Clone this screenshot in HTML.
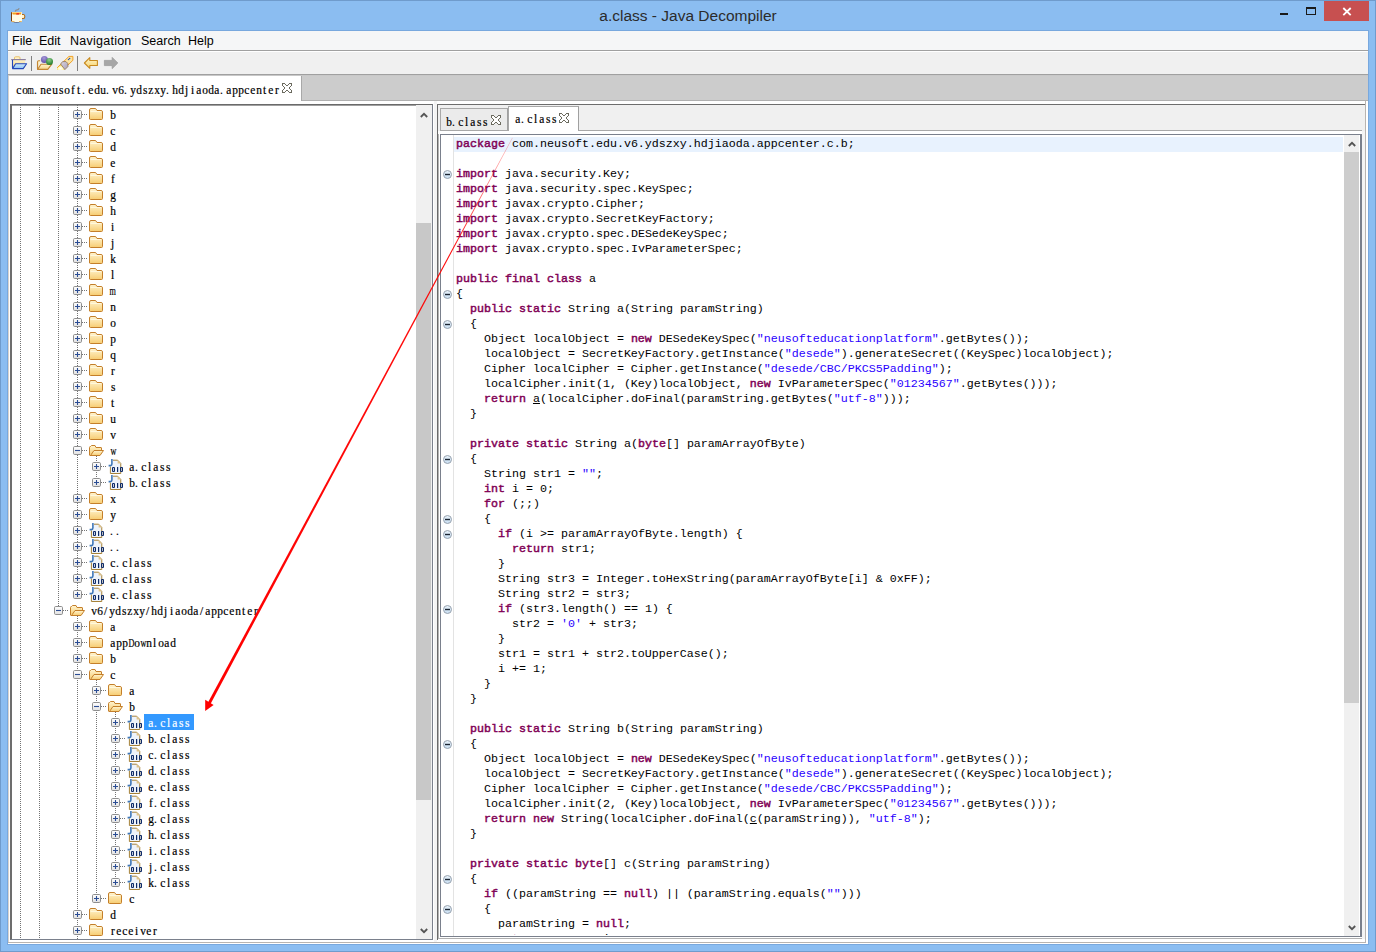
<!DOCTYPE html><html><head><meta charset="utf-8"><style>
*{margin:0;padding:0}
html,body{width:1376px;height:952px;overflow:hidden}
body{position:relative;background:#8bbdf1;font-family:"Liberation Sans",sans-serif}
body div,body svg{position:absolute}
body div div,body div svg{position:absolute}
.tt{font-size:15.5px;color:#2b2b2b;line-height:20px}
.mn{font-size:12.5px;color:#000;line-height:16px}
.tr{font-family:"Liberation Serif",serif;font-size:12px;line-height:15px;color:#000;white-space:pre;-webkit-text-stroke:0.2px currentColor}
.tr i{font-style:normal;display:inline-flex;justify-content:center;width:6px}
.tr em{font-style:normal;display:inline-block;transform:scaleX(0.95)}
.tr em.w{transform:scaleX(0.68)}
.tr{margin-left:0}
.cd{font-family:"Liberation Mono",monospace;font-size:11.6667px;line-height:15px;white-space:pre;color:#000}
.cd b{color:#7f0055;font-weight:normal;-webkit-text-stroke:0.45px #7f0055}
.cd .s{color:#2a00ff}
.cd u{text-decoration:underline}
.dv{width:1px;background:repeating-linear-gradient(to bottom,#747474 0 1px,transparent 1px 2px)}
.dh{height:1px;background:repeating-linear-gradient(to right,#747474 0 1px,transparent 1px 2px)}
</style></head><body>
<svg width="0" height="0" style="position:absolute">
<defs>
<linearGradient id="gF" x1="0" y1="0" x2="0" y2="1"><stop offset="0" stop-color="#fff5d2"/><stop offset="1" stop-color="#f7cd72"/></linearGradient>
<linearGradient id="gB" x1="0" y1="0" x2="0" y2="1"><stop offset="0" stop-color="#ffffff"/><stop offset="1" stop-color="#e2e2e2"/></linearGradient>
<linearGradient id="gC" x1="0" y1="0" x2="0" y2="1"><stop offset="0" stop-color="#eaf3fb"/><stop offset="1" stop-color="#c8def2"/></linearGradient>
<symbol id="plus" viewBox="0 0 9 9"><rect x="0.5" y="0.5" width="8" height="8" rx="1.2" fill="url(#gB)" stroke="#8e8e8e"/><path d="M2 4.5h5M4.5 2v5" stroke="#2b4d94" stroke-width="1.1"/></symbol>
<symbol id="minus" viewBox="0 0 9 9"><rect x="0.5" y="0.5" width="8" height="8" rx="1.2" fill="url(#gB)" stroke="#8e8e8e"/><path d="M2 4.5h5" stroke="#2b4d94" stroke-width="1.1"/></symbol>
<symbol id="fc" viewBox="0 0 16 14"><path d="M0.5 11V2q0-1.5 1.5-1.5h4.6L8 2.5h4q1.5 0 1.5 1.5v6.5q0 1-1 1H1.5q-1 0-1-1z" fill="url(#gF)" stroke="#c47f2a"/><path d="M1.5 3.5h11" stroke="#fff8dc" stroke-width="1"/></symbol>
<symbol id="fo" viewBox="0 0 16 13"><path d="M0.5 10V2.5q0-1 1-1L2.5 0.5h3.5l1 2h5q0.5 0 0.5 0.5v3" fill="url(#gF)" stroke="#c47f2a"/><path d="M1.5 10.5L5 5.5h9.5L11 10.5z" fill="url(#gF)" stroke="#c47f2a" stroke-linejoin="round"/><path d="M0.5 10.5h10.5" stroke="#c47f2a"/></symbol>
<symbol id="cls" viewBox="0 0 16 16"><path d="M2.4 8.5v7h10.35V5.4l-3.1-3.2H5" fill="#eef3fa" stroke="#a6823a"/><path d="M9.6 2.2v3.2h3.2z" fill="#e2c488"/><path d="M3.9 1v5q0 1.6-1.6 1.6H0.6" fill="none" stroke="#3f77b8" stroke-width="1.6"/><path fill-rule="evenodd" fill="#0f2b68" d="M5 9h1q1 0 1 1v3q0 1-1 1h-1q-1 0-1-1v-3q0-1 1-1zM5.1 10v3h0.8v-3zM9 9h1.2v5h-1.2zM13 9h1q1 0 1 1v3q0 1-1 1h-1q-1 0-1-1v-3q0-1 1-1zM13.1 10v3h0.8v-3z"/></symbol>
<symbol id="fold" viewBox="0 0 9 9"><circle cx="4.5" cy="4.5" r="4" fill="url(#gC)" stroke="#98a3af"/><path d="M2 4.5h5" stroke="#1b2532" stroke-width="1.4"/></symbol>
<symbol id="tx" viewBox="0 0 10 10"><path d="M1 1h2l3 3l3-3h... " fill="none"/><path d="M1 1H3L5 3L7 1H9V3L7 5L9 7V9H7L5 7L3 9H1V7L3 5L1 3Z" fill="#fff"/><path d="M0 0h3v1h-3zM7 0h3v1h-3zM0 1h1v1h-1zM3 1h1v1h-1zM6 1h1v1h-1zM9 1h1v1h-1zM0 2h1v1h-1zM4 2h2v1h-2zM9 2h1v1h-1zM1 3h1v1h-1zM8 3h1v1h-1zM2 4h1v1h-1zM7 4h1v1h-1zM2 5h1v1h-1zM7 5h1v1h-1zM1 6h1v1h-1zM8 6h1v1h-1zM0 7h1v1h-1zM4 7h2v1h-2zM9 7h1v1h-1zM0 8h1v1h-1zM3 8h1v1h-1zM6 8h1v1h-1zM9 8h1v1h-1zM0 9h3v1h-3zM7 9h3v1h-3z" fill="#6b6a5e" shape-rendering="crispEdges"/></symbol>
<symbol id="up" viewBox="0 0 8 6"><path d="M0.8 5L4 1.8L7.2 5" fill="none" stroke="#555" stroke-width="1.8"/></symbol>
<symbol id="dn" viewBox="0 0 8 6"><path d="M0.8 1L4 4.2L7.2 1" fill="none" stroke="#555" stroke-width="1.8"/></symbol>
</defs></svg>
<div style="left:0px;top:0px;width:1376px;height:1px;background:#6f9bcc;"></div>
<div style="left:0px;top:0px;width:1px;height:952px;background:#6f9bcc;"></div>
<div style="left:1375px;top:0px;width:1px;height:952px;background:#6f9bcc;"></div>
<div style="left:0px;top:951px;width:1376px;height:1px;background:#6f9bcc;"></div>
<div class="tt" style="left:0;top:6px;width:1376px;text-align:center">a.class - Java Decompiler</div>
<div style="left:1324px;top:1px;width:45px;height:20px;background:#c75050;"></div>
<svg style="left:1342px;top:7px" width="10" height="9"><path d="M1.3 1L8.7 8.2M8.7 1L1.3 8.2" stroke="#fff" stroke-width="1.8"/></svg>
<div style="left:1306px;top:7px;width:8px;height:5px;border:1px solid #1a1a1a;border-top-width:2px"></div>
<div style="left:1280px;top:13px;width:8px;height:2px;background:#1a1a1a;"></div>
<svg style="left:0px;top:0px" width="30" height="30" viewBox="0 0 30 30">
<path d="M15.2 11.5q0.5-1.5 2-1.6q1.2 0 2-1.6" fill="none" stroke="#8c8c8c" stroke-width="1.2"/>
<ellipse cx="16.5" cy="22.3" rx="3" ry="0.8" fill="#5a5060" opacity="0.6"/>
<path d="M22 14.5h1.5q1.3 0 1.3 2t-1.3 2H22" fill="#fff4d0" stroke="#b06a18" stroke-width="1.1"/>
<rect x="11" y="12" width="11" height="10" fill="#fffbe6"/>
<path d="M11.5 12.2v9.3" stroke="#7a3e10" stroke-width="1"/>
<path d="M12 12.4h9.6l-0.8 2.2h-8z" fill="#f2a020"/>
<path d="M16.5 13.2h2.8l-0.5 1.4h-2.6z" fill="#e8181a"/>
<path d="M12 21.6h2.5M19 21.6h2.8" stroke="#e0a040" stroke-width="0.9"/>
</svg>
<div style="left:7px;top:30px;width:1362px;height:915px;background:#78a8de;"></div>
<div style="left:8px;top:31px;width:1360px;height:913px;background:#ffffff;"></div>
<div style="left:8px;top:31px;width:1360px;height:19px;background:#f5f6f7;"></div>
<div style="left:8px;top:50px;width:1360px;height:1px;background:#a0a0a0;"></div>
<div style="left:8px;top:51px;width:1360px;height:1px;background:#ffffff;"></div>
<div class="mn" style="left:12px;top:33px;letter-spacing:0px">File</div>
<div class="mn" style="left:39px;top:33px;letter-spacing:0px">Edit</div>
<div class="mn" style="left:70px;top:33px;letter-spacing:0.25px">Navigation</div>
<div class="mn" style="left:141px;top:33px;letter-spacing:0px">Search</div>
<div class="mn" style="left:188px;top:33px;letter-spacing:0px">Help</div>
<div style="left:8px;top:52px;width:1360px;height:22px;background:#f0f0f0;"></div>
<div style="left:8px;top:74px;width:1360px;height:1px;background:#a0a0a0;"></div>
<div style="left:8px;top:75px;width:1360px;height:1px;background:#c8c8c8;"></div>
<div style="left:31px;top:56px;width:1px;height:15px;background:#808080;"></div>
<div style="left:77px;top:56px;width:1px;height:15px;background:#808080;"></div>
<svg style="left:8px;top:52px" width="115" height="22" viewBox="8 52 115 22">
<defs>
<linearGradient id="tbY" x1="0" y1="0" x2="0" y2="1"><stop offset="0" stop-color="#fff4cc"/><stop offset="1" stop-color="#f6d589"/></linearGradient>
<linearGradient id="tbB" x1="0" y1="0" x2="0" y2="1"><stop offset="0" stop-color="#d2ecff"/><stop offset="1" stop-color="#8cc0f0"/></linearGradient>
<radialGradient id="tbP" cx="0.45" cy="0.3" r="0.7"><stop offset="0" stop-color="#a89ad8"/><stop offset="1" stop-color="#5e4ea8"/></radialGradient>
<radialGradient id="tbG" cx="0.45" cy="0.3" r="0.7"><stop offset="0" stop-color="#8fd08a"/><stop offset="1" stop-color="#1f7a2c"/></radialGradient>
<linearGradient id="tbT" x1="0" y1="1" x2="1" y2="0"><stop offset="0" stop-color="#fffbe6"/><stop offset="1" stop-color="#f2c640"/></linearGradient>
</defs>
<path d="M14.5 59.5V57.8q0-1 1-1h3.5q1 0 1 1v1.7" fill="#fff3c8" stroke="#e8bf6a"/>
<rect x="13" y="59.5" width="12" height="8" fill="url(#tbY)"/>
<path d="M11.2 59.6h14.6" stroke="#8d7f9c" stroke-width="1.2"/>
<path d="M12.5 60v8.5" stroke="#2448b8" stroke-width="1.1"/>
<path d="M12.6 68.6L15.6 63.8H26.6L23.2 68.6Z" fill="url(#tbB)" stroke="#2448b8" stroke-width="1.1" stroke-linejoin="round"/>
<path d="M37.5 69.3V62q0-1.3 1.2-1.3h1.5" fill="url(#tbY)" stroke="#c48635" stroke-width="1.1"/>
<path d="M37.6 69.4L41 64.2H51.8L47.8 69.4Z" fill="url(#tbY)" stroke="#c48635" stroke-width="1.1" stroke-linejoin="round"/>
<circle cx="44.4" cy="59.5" r="3.5" fill="url(#tbP)"/>
<circle cx="49.5" cy="61.4" r="3.5" fill="url(#tbG)"/>
<radialGradient id="tbW" cx="0.45" cy="0.75" r="0.6"><stop offset="0" stop-color="#ffffff"/><stop offset="0.5" stop-color="#fff8c0"/><stop offset="1" stop-color="#f2d040"/></radialGradient>
<linearGradient id="tbS" x1="0" y1="0" x2="1" y2="1"><stop offset="0" stop-color="#dcd8e4"/><stop offset="1" stop-color="#a69cb4"/></linearGradient>
<path d="M63.8 61.4L68.9 56.4H72.9V60.3L67.8 65.2Z" fill="#fbe4a2" stroke="#f2a126" stroke-width="1"/>
<path d="M57 70V67.6L60.6 64L64.8 69.8Z" fill="url(#tbW)"/>
<path d="M57.2 67.8L63.8 61.4" stroke="#f2a126" stroke-width="1"/>
<path d="M60.6 64L62.6 61.6H66L67.9 63.6V66.6L64.9 69.6Z" fill="url(#tbS)" stroke="#8e7250" stroke-width="0.8" stroke-linejoin="round"/>
<circle cx="68.5" cy="59.5" r="0.75" fill="#2f57b0"/><circle cx="69.6" cy="58.4" r="0.75" fill="#2f57b0"/>
<linearGradient id="tbA" x1="0" y1="0" x2="0" y2="1"><stop offset="0" stop-color="#fff6d0"/><stop offset="1" stop-color="#f7d266"/></linearGradient><path d="M84.4 63L89.8 57.7V60.5H97.4V65.5H89.8V68.3Z" fill="url(#tbA)" stroke="#c88a1f" stroke-width="1.1" stroke-linejoin="round"/>
<path d="M117.8 63L112.2 57.4V60.4H104.4V65.6H112.2V68.6Z" fill="#a6a6a6" stroke="#9a9a9a" stroke-width="0.8" stroke-linejoin="round"/>
</svg>
<div style="left:8px;top:76px;width:1360px;height:25px;background:#cccccc;"></div>
<div style="left:301px;top:100px;width:1067px;height:1px;background:#b0b0b0;"></div>
<div style="left:8px;top:76px;width:294px;height:25px;background:#ffffff;border-left:1px solid #b5b5b5;border-right:1px solid #a8a8a8;box-sizing:border-box"></div>
<div style="left:8px;top:101px;width:294px;height:3px;background:#ffffff;"></div>
<div class="tr" style="left:16px;top:83px"><i><em>c</em></i><i><em>o</em></i><i><em class="w">m</em></i><i style="justify-content:flex-start"><em>.</em></i><i><em>n</em></i><i><em>e</em></i><i><em>u</em></i><i><em>s</em></i><i><em>o</em></i><i><em>f</em></i><i><em>t</em></i><i style="justify-content:flex-start"><em>.</em></i><i><em>e</em></i><i><em>d</em></i><i><em>u</em></i><i style="justify-content:flex-start"><em>.</em></i><i><em>v</em></i><i><em>6</em></i><i style="justify-content:flex-start"><em>.</em></i><i><em>y</em></i><i><em>d</em></i><i><em>s</em></i><i><em>z</em></i><i><em>x</em></i><i><em>y</em></i><i style="justify-content:flex-start"><em>.</em></i><i><em>h</em></i><i><em>d</em></i><i><em>j</em></i><i><em>i</em></i><i><em>a</em></i><i><em>o</em></i><i><em>d</em></i><i><em>a</em></i><i style="justify-content:flex-start"><em>.</em></i><i><em>a</em></i><i><em>p</em></i><i><em>p</em></i><i><em>c</em></i><i><em>e</em></i><i><em>n</em></i><i><em>t</em></i><i><em>e</em></i><i><em>r</em></i></div>
<svg style="left:282px;top:83px" width="10" height="10"><use href="#tx"/></svg>
<div style="left:10px;top:104px;width:423px;height:836px;background:#ffffff;box-sizing:border-box;border-top:1px solid #6a6a6a;border-left:2px solid #6d6d6d;border-bottom:1px solid #7a808c;border-right:1px solid #7a808c"></div>
<div style="left:12px;top:105px;width:420px;height:1px;background:#a0a0a0;"></div>
<div style="left:12px;top:105px;width:404px;height:834px;overflow:hidden" id="tree">
<div class="dv" style="left:8px;top:0px;height:834px"></div>
<div class="dv" style="left:27px;top:0px;height:834px"></div>
<div class="dv" style="left:46px;top:0px;height:501px"></div>
<div class="dv" style="left:65px;top:0px;height:489px"></div>
<div class="dv" style="left:65px;top:511px;height:323px"></div>
<div class="dv" style="left:84px;top:351px;height:26px"></div>
<div class="dv" style="left:84px;top:575px;height:218px"></div>
<div class="dv" style="left:103px;top:607px;height:170px"></div>
<div class="dh" style="left:70px;top:9px;width:6px"></div>
<svg style="left:61px;top:5px" width="9" height="9"><use href="#plus"/></svg>
<svg style="left:77px;top:3px" width="16" height="14"><use href="#fc"/></svg>
<div class="tr" style="left:98px;top:3px"><i><em>b</em></i></div>
<div class="dh" style="left:70px;top:25px;width:6px"></div>
<svg style="left:61px;top:21px" width="9" height="9"><use href="#plus"/></svg>
<svg style="left:77px;top:19px" width="16" height="14"><use href="#fc"/></svg>
<div class="tr" style="left:98px;top:19px"><i><em>c</em></i></div>
<div class="dh" style="left:70px;top:41px;width:6px"></div>
<svg style="left:61px;top:37px" width="9" height="9"><use href="#plus"/></svg>
<svg style="left:77px;top:35px" width="16" height="14"><use href="#fc"/></svg>
<div class="tr" style="left:98px;top:35px"><i><em>d</em></i></div>
<div class="dh" style="left:70px;top:57px;width:6px"></div>
<svg style="left:61px;top:53px" width="9" height="9"><use href="#plus"/></svg>
<svg style="left:77px;top:51px" width="16" height="14"><use href="#fc"/></svg>
<div class="tr" style="left:98px;top:51px"><i><em>e</em></i></div>
<div class="dh" style="left:70px;top:73px;width:6px"></div>
<svg style="left:61px;top:69px" width="9" height="9"><use href="#plus"/></svg>
<svg style="left:77px;top:67px" width="16" height="14"><use href="#fc"/></svg>
<div class="tr" style="left:98px;top:67px"><i><em>f</em></i></div>
<div class="dh" style="left:70px;top:89px;width:6px"></div>
<svg style="left:61px;top:85px" width="9" height="9"><use href="#plus"/></svg>
<svg style="left:77px;top:83px" width="16" height="14"><use href="#fc"/></svg>
<div class="tr" style="left:98px;top:83px"><i><em>g</em></i></div>
<div class="dh" style="left:70px;top:105px;width:6px"></div>
<svg style="left:61px;top:101px" width="9" height="9"><use href="#plus"/></svg>
<svg style="left:77px;top:99px" width="16" height="14"><use href="#fc"/></svg>
<div class="tr" style="left:98px;top:99px"><i><em>h</em></i></div>
<div class="dh" style="left:70px;top:121px;width:6px"></div>
<svg style="left:61px;top:117px" width="9" height="9"><use href="#plus"/></svg>
<svg style="left:77px;top:115px" width="16" height="14"><use href="#fc"/></svg>
<div class="tr" style="left:98px;top:115px"><i><em>i</em></i></div>
<div class="dh" style="left:70px;top:137px;width:6px"></div>
<svg style="left:61px;top:133px" width="9" height="9"><use href="#plus"/></svg>
<svg style="left:77px;top:131px" width="16" height="14"><use href="#fc"/></svg>
<div class="tr" style="left:98px;top:131px"><i><em>j</em></i></div>
<div class="dh" style="left:70px;top:153px;width:6px"></div>
<svg style="left:61px;top:149px" width="9" height="9"><use href="#plus"/></svg>
<svg style="left:77px;top:147px" width="16" height="14"><use href="#fc"/></svg>
<div class="tr" style="left:98px;top:147px"><i><em>k</em></i></div>
<div class="dh" style="left:70px;top:169px;width:6px"></div>
<svg style="left:61px;top:165px" width="9" height="9"><use href="#plus"/></svg>
<svg style="left:77px;top:163px" width="16" height="14"><use href="#fc"/></svg>
<div class="tr" style="left:98px;top:163px"><i><em>l</em></i></div>
<div class="dh" style="left:70px;top:185px;width:6px"></div>
<svg style="left:61px;top:181px" width="9" height="9"><use href="#plus"/></svg>
<svg style="left:77px;top:179px" width="16" height="14"><use href="#fc"/></svg>
<div class="tr" style="left:98px;top:179px"><i><em class="w">m</em></i></div>
<div class="dh" style="left:70px;top:201px;width:6px"></div>
<svg style="left:61px;top:197px" width="9" height="9"><use href="#plus"/></svg>
<svg style="left:77px;top:195px" width="16" height="14"><use href="#fc"/></svg>
<div class="tr" style="left:98px;top:195px"><i><em>n</em></i></div>
<div class="dh" style="left:70px;top:217px;width:6px"></div>
<svg style="left:61px;top:213px" width="9" height="9"><use href="#plus"/></svg>
<svg style="left:77px;top:211px" width="16" height="14"><use href="#fc"/></svg>
<div class="tr" style="left:98px;top:211px"><i><em>o</em></i></div>
<div class="dh" style="left:70px;top:233px;width:6px"></div>
<svg style="left:61px;top:229px" width="9" height="9"><use href="#plus"/></svg>
<svg style="left:77px;top:227px" width="16" height="14"><use href="#fc"/></svg>
<div class="tr" style="left:98px;top:227px"><i><em>p</em></i></div>
<div class="dh" style="left:70px;top:249px;width:6px"></div>
<svg style="left:61px;top:245px" width="9" height="9"><use href="#plus"/></svg>
<svg style="left:77px;top:243px" width="16" height="14"><use href="#fc"/></svg>
<div class="tr" style="left:98px;top:243px"><i><em>q</em></i></div>
<div class="dh" style="left:70px;top:265px;width:6px"></div>
<svg style="left:61px;top:261px" width="9" height="9"><use href="#plus"/></svg>
<svg style="left:77px;top:259px" width="16" height="14"><use href="#fc"/></svg>
<div class="tr" style="left:98px;top:259px"><i><em>r</em></i></div>
<div class="dh" style="left:70px;top:281px;width:6px"></div>
<svg style="left:61px;top:277px" width="9" height="9"><use href="#plus"/></svg>
<svg style="left:77px;top:275px" width="16" height="14"><use href="#fc"/></svg>
<div class="tr" style="left:98px;top:275px"><i><em>s</em></i></div>
<div class="dh" style="left:70px;top:297px;width:6px"></div>
<svg style="left:61px;top:293px" width="9" height="9"><use href="#plus"/></svg>
<svg style="left:77px;top:291px" width="16" height="14"><use href="#fc"/></svg>
<div class="tr" style="left:98px;top:291px"><i><em>t</em></i></div>
<div class="dh" style="left:70px;top:313px;width:6px"></div>
<svg style="left:61px;top:309px" width="9" height="9"><use href="#plus"/></svg>
<svg style="left:77px;top:307px" width="16" height="14"><use href="#fc"/></svg>
<div class="tr" style="left:98px;top:307px"><i><em>u</em></i></div>
<div class="dh" style="left:70px;top:329px;width:6px"></div>
<svg style="left:61px;top:325px" width="9" height="9"><use href="#plus"/></svg>
<svg style="left:77px;top:323px" width="16" height="14"><use href="#fc"/></svg>
<div class="tr" style="left:98px;top:323px"><i><em>v</em></i></div>
<div class="dh" style="left:70px;top:345px;width:6px"></div>
<svg style="left:61px;top:341px" width="9" height="9"><use href="#minus"/></svg>
<svg style="left:77px;top:340px" width="16" height="13"><use href="#fo"/></svg>
<div class="tr" style="left:98px;top:339px"><i><em class="w">w</em></i></div>
<div class="dh" style="left:89px;top:361px;width:6px"></div>
<svg style="left:80px;top:357px" width="9" height="9"><use href="#plus"/></svg>
<svg style="left:96px;top:353px" width="16" height="16"><use href="#cls"/></svg>
<div class="tr" style="left:117px;top:355px"><i><em>a</em></i><i style="justify-content:flex-start"><em>.</em></i><i><em>c</em></i><i><em>l</em></i><i><em>a</em></i><i><em>s</em></i><i><em>s</em></i></div>
<div class="dh" style="left:89px;top:377px;width:6px"></div>
<svg style="left:80px;top:373px" width="9" height="9"><use href="#plus"/></svg>
<svg style="left:96px;top:369px" width="16" height="16"><use href="#cls"/></svg>
<div class="tr" style="left:117px;top:371px"><i><em>b</em></i><i style="justify-content:flex-start"><em>.</em></i><i><em>c</em></i><i><em>l</em></i><i><em>a</em></i><i><em>s</em></i><i><em>s</em></i></div>
<div class="dh" style="left:70px;top:393px;width:6px"></div>
<svg style="left:61px;top:389px" width="9" height="9"><use href="#plus"/></svg>
<svg style="left:77px;top:387px" width="16" height="14"><use href="#fc"/></svg>
<div class="tr" style="left:98px;top:387px"><i><em>x</em></i></div>
<div class="dh" style="left:70px;top:409px;width:6px"></div>
<svg style="left:61px;top:405px" width="9" height="9"><use href="#plus"/></svg>
<svg style="left:77px;top:403px" width="16" height="14"><use href="#fc"/></svg>
<div class="tr" style="left:98px;top:403px"><i><em>y</em></i></div>
<div class="dh" style="left:70px;top:425px;width:6px"></div>
<svg style="left:61px;top:421px" width="9" height="9"><use href="#plus"/></svg>
<svg style="left:77px;top:417px" width="16" height="16"><use href="#cls"/></svg>
<div class="tr" style="left:98px;top:419px"><i style="justify-content:flex-start"><em>.</em></i><i style="justify-content:flex-start"><em>.</em></i></div>
<div class="dh" style="left:70px;top:441px;width:6px"></div>
<svg style="left:61px;top:437px" width="9" height="9"><use href="#plus"/></svg>
<svg style="left:77px;top:433px" width="16" height="16"><use href="#cls"/></svg>
<div class="tr" style="left:98px;top:435px"><i style="justify-content:flex-start"><em>.</em></i><i style="justify-content:flex-start"><em>.</em></i></div>
<div class="dh" style="left:70px;top:457px;width:6px"></div>
<svg style="left:61px;top:453px" width="9" height="9"><use href="#plus"/></svg>
<svg style="left:77px;top:449px" width="16" height="16"><use href="#cls"/></svg>
<div class="tr" style="left:98px;top:451px"><i><em>c</em></i><i style="justify-content:flex-start"><em>.</em></i><i><em>c</em></i><i><em>l</em></i><i><em>a</em></i><i><em>s</em></i><i><em>s</em></i></div>
<div class="dh" style="left:70px;top:473px;width:6px"></div>
<svg style="left:61px;top:469px" width="9" height="9"><use href="#plus"/></svg>
<svg style="left:77px;top:465px" width="16" height="16"><use href="#cls"/></svg>
<div class="tr" style="left:98px;top:467px"><i><em>d</em></i><i style="justify-content:flex-start"><em>.</em></i><i><em>c</em></i><i><em>l</em></i><i><em>a</em></i><i><em>s</em></i><i><em>s</em></i></div>
<div class="dh" style="left:70px;top:489px;width:6px"></div>
<svg style="left:61px;top:485px" width="9" height="9"><use href="#plus"/></svg>
<svg style="left:77px;top:481px" width="16" height="16"><use href="#cls"/></svg>
<div class="tr" style="left:98px;top:483px"><i><em>e</em></i><i style="justify-content:flex-start"><em>.</em></i><i><em>c</em></i><i><em>l</em></i><i><em>a</em></i><i><em>s</em></i><i><em>s</em></i></div>
<div class="dh" style="left:51px;top:505px;width:6px"></div>
<svg style="left:42px;top:501px" width="9" height="9"><use href="#minus"/></svg>
<svg style="left:58px;top:500px" width="16" height="13"><use href="#fo"/></svg>
<div class="tr" style="left:79px;top:499px"><i><em>v</em></i><i><em>6</em></i><i><em>/</em></i><i><em>y</em></i><i><em>d</em></i><i><em>s</em></i><i><em>z</em></i><i><em>x</em></i><i><em>y</em></i><i><em>/</em></i><i><em>h</em></i><i><em>d</em></i><i><em>j</em></i><i><em>i</em></i><i><em>a</em></i><i><em>o</em></i><i><em>d</em></i><i><em>a</em></i><i><em>/</em></i><i><em>a</em></i><i><em>p</em></i><i><em>p</em></i><i><em>c</em></i><i><em>e</em></i><i><em>n</em></i><i><em>t</em></i><i><em>e</em></i><i><em>r</em></i></div>
<div class="dh" style="left:70px;top:521px;width:6px"></div>
<svg style="left:61px;top:517px" width="9" height="9"><use href="#plus"/></svg>
<svg style="left:77px;top:515px" width="16" height="14"><use href="#fc"/></svg>
<div class="tr" style="left:98px;top:515px"><i><em>a</em></i></div>
<div class="dh" style="left:70px;top:537px;width:6px"></div>
<svg style="left:61px;top:533px" width="9" height="9"><use href="#plus"/></svg>
<svg style="left:77px;top:531px" width="16" height="14"><use href="#fc"/></svg>
<div class="tr" style="left:98px;top:531px"><i><em>a</em></i><i><em>p</em></i><i><em>p</em></i><i><em class="w">D</em></i><i><em>o</em></i><i><em class="w">w</em></i><i><em>n</em></i><i><em>l</em></i><i><em>o</em></i><i><em>a</em></i><i><em>d</em></i></div>
<div class="dh" style="left:70px;top:553px;width:6px"></div>
<svg style="left:61px;top:549px" width="9" height="9"><use href="#plus"/></svg>
<svg style="left:77px;top:547px" width="16" height="14"><use href="#fc"/></svg>
<div class="tr" style="left:98px;top:547px"><i><em>b</em></i></div>
<div class="dh" style="left:70px;top:569px;width:6px"></div>
<svg style="left:61px;top:565px" width="9" height="9"><use href="#minus"/></svg>
<svg style="left:77px;top:564px" width="16" height="13"><use href="#fo"/></svg>
<div class="tr" style="left:98px;top:563px"><i><em>c</em></i></div>
<div class="dh" style="left:89px;top:585px;width:6px"></div>
<svg style="left:80px;top:581px" width="9" height="9"><use href="#plus"/></svg>
<svg style="left:96px;top:579px" width="16" height="14"><use href="#fc"/></svg>
<div class="tr" style="left:117px;top:579px"><i><em>a</em></i></div>
<div class="dh" style="left:89px;top:601px;width:6px"></div>
<svg style="left:80px;top:597px" width="9" height="9"><use href="#minus"/></svg>
<svg style="left:96px;top:596px" width="16" height="13"><use href="#fo"/></svg>
<div class="tr" style="left:117px;top:595px"><i><em>b</em></i></div>
<div class="dh" style="left:108px;top:617px;width:6px"></div>
<svg style="left:99px;top:613px" width="9" height="9"><use href="#plus"/></svg>
<svg style="left:115px;top:609px" width="16" height="16"><use href="#cls"/></svg>
<div style="left:132px;top:609px;width:50px;height:16px;background:#3399ff;"></div>
<div class="tr" style="left:136px;top:611px;color:#fff"><i><em>a</em></i><i style="justify-content:flex-start"><em>.</em></i><i><em>c</em></i><i><em>l</em></i><i><em>a</em></i><i><em>s</em></i><i><em>s</em></i></div>
<div class="dh" style="left:108px;top:633px;width:6px"></div>
<svg style="left:99px;top:629px" width="9" height="9"><use href="#plus"/></svg>
<svg style="left:115px;top:625px" width="16" height="16"><use href="#cls"/></svg>
<div class="tr" style="left:136px;top:627px"><i><em>b</em></i><i style="justify-content:flex-start"><em>.</em></i><i><em>c</em></i><i><em>l</em></i><i><em>a</em></i><i><em>s</em></i><i><em>s</em></i></div>
<div class="dh" style="left:108px;top:649px;width:6px"></div>
<svg style="left:99px;top:645px" width="9" height="9"><use href="#plus"/></svg>
<svg style="left:115px;top:641px" width="16" height="16"><use href="#cls"/></svg>
<div class="tr" style="left:136px;top:643px"><i><em>c</em></i><i style="justify-content:flex-start"><em>.</em></i><i><em>c</em></i><i><em>l</em></i><i><em>a</em></i><i><em>s</em></i><i><em>s</em></i></div>
<div class="dh" style="left:108px;top:665px;width:6px"></div>
<svg style="left:99px;top:661px" width="9" height="9"><use href="#plus"/></svg>
<svg style="left:115px;top:657px" width="16" height="16"><use href="#cls"/></svg>
<div class="tr" style="left:136px;top:659px"><i><em>d</em></i><i style="justify-content:flex-start"><em>.</em></i><i><em>c</em></i><i><em>l</em></i><i><em>a</em></i><i><em>s</em></i><i><em>s</em></i></div>
<div class="dh" style="left:108px;top:681px;width:6px"></div>
<svg style="left:99px;top:677px" width="9" height="9"><use href="#plus"/></svg>
<svg style="left:115px;top:673px" width="16" height="16"><use href="#cls"/></svg>
<div class="tr" style="left:136px;top:675px"><i><em>e</em></i><i style="justify-content:flex-start"><em>.</em></i><i><em>c</em></i><i><em>l</em></i><i><em>a</em></i><i><em>s</em></i><i><em>s</em></i></div>
<div class="dh" style="left:108px;top:697px;width:6px"></div>
<svg style="left:99px;top:693px" width="9" height="9"><use href="#plus"/></svg>
<svg style="left:115px;top:689px" width="16" height="16"><use href="#cls"/></svg>
<div class="tr" style="left:136px;top:691px"><i><em>f</em></i><i style="justify-content:flex-start"><em>.</em></i><i><em>c</em></i><i><em>l</em></i><i><em>a</em></i><i><em>s</em></i><i><em>s</em></i></div>
<div class="dh" style="left:108px;top:713px;width:6px"></div>
<svg style="left:99px;top:709px" width="9" height="9"><use href="#plus"/></svg>
<svg style="left:115px;top:705px" width="16" height="16"><use href="#cls"/></svg>
<div class="tr" style="left:136px;top:707px"><i><em>g</em></i><i style="justify-content:flex-start"><em>.</em></i><i><em>c</em></i><i><em>l</em></i><i><em>a</em></i><i><em>s</em></i><i><em>s</em></i></div>
<div class="dh" style="left:108px;top:729px;width:6px"></div>
<svg style="left:99px;top:725px" width="9" height="9"><use href="#plus"/></svg>
<svg style="left:115px;top:721px" width="16" height="16"><use href="#cls"/></svg>
<div class="tr" style="left:136px;top:723px"><i><em>h</em></i><i style="justify-content:flex-start"><em>.</em></i><i><em>c</em></i><i><em>l</em></i><i><em>a</em></i><i><em>s</em></i><i><em>s</em></i></div>
<div class="dh" style="left:108px;top:745px;width:6px"></div>
<svg style="left:99px;top:741px" width="9" height="9"><use href="#plus"/></svg>
<svg style="left:115px;top:737px" width="16" height="16"><use href="#cls"/></svg>
<div class="tr" style="left:136px;top:739px"><i><em>i</em></i><i style="justify-content:flex-start"><em>.</em></i><i><em>c</em></i><i><em>l</em></i><i><em>a</em></i><i><em>s</em></i><i><em>s</em></i></div>
<div class="dh" style="left:108px;top:761px;width:6px"></div>
<svg style="left:99px;top:757px" width="9" height="9"><use href="#plus"/></svg>
<svg style="left:115px;top:753px" width="16" height="16"><use href="#cls"/></svg>
<div class="tr" style="left:136px;top:755px"><i><em>j</em></i><i style="justify-content:flex-start"><em>.</em></i><i><em>c</em></i><i><em>l</em></i><i><em>a</em></i><i><em>s</em></i><i><em>s</em></i></div>
<div class="dh" style="left:108px;top:777px;width:6px"></div>
<svg style="left:99px;top:773px" width="9" height="9"><use href="#plus"/></svg>
<svg style="left:115px;top:769px" width="16" height="16"><use href="#cls"/></svg>
<div class="tr" style="left:136px;top:771px"><i><em>k</em></i><i style="justify-content:flex-start"><em>.</em></i><i><em>c</em></i><i><em>l</em></i><i><em>a</em></i><i><em>s</em></i><i><em>s</em></i></div>
<div class="dh" style="left:89px;top:793px;width:6px"></div>
<svg style="left:80px;top:789px" width="9" height="9"><use href="#plus"/></svg>
<svg style="left:96px;top:787px" width="16" height="14"><use href="#fc"/></svg>
<div class="tr" style="left:117px;top:787px"><i><em>c</em></i></div>
<div class="dh" style="left:70px;top:809px;width:6px"></div>
<svg style="left:61px;top:805px" width="9" height="9"><use href="#plus"/></svg>
<svg style="left:77px;top:803px" width="16" height="14"><use href="#fc"/></svg>
<div class="tr" style="left:98px;top:803px"><i><em>d</em></i></div>
<div class="dh" style="left:70px;top:825px;width:6px"></div>
<svg style="left:61px;top:821px" width="9" height="9"><use href="#plus"/></svg>
<svg style="left:77px;top:819px" width="16" height="14"><use href="#fc"/></svg>
<div class="tr" style="left:98px;top:819px"><i><em>r</em></i><i><em>e</em></i><i><em>c</em></i><i><em>e</em></i><i><em>i</em></i><i><em>v</em></i><i><em>e</em></i><i><em>r</em></i></div>
</div>
<div style="left:416px;top:105px;width:16px;height:834px;background:#f0f0f0;"></div>
<div style="left:416px;top:223px;width:15px;height:577px;background:#c8c8c8;"></div>
<svg style="left:420px;top:112px" width="8" height="6"><use href="#up"/></svg>
<svg style="left:420px;top:928px" width="8" height="6"><use href="#dn"/></svg>
<div style="left:434px;top:101px;width:3px;height:842px;background:#f4f4f4;"></div>
<div style="left:437px;top:101px;width:928px;height:3px;background:#ffffff;"></div>
<div style="left:437px;top:104px;width:928px;height:835px;background:#ffffff;"></div>
<div style="left:437px;top:104px;width:1px;height:836px;background:#6a6a6a;"></div>
<div style="left:438px;top:105px;width:1px;height:834px;background:#b4b4b4;"></div>
<div style="left:437px;top:104px;width:928px;height:1px;background:#6d6d6d;"></div>
<div style="left:438px;top:105px;width:927px;height:26px;background:#f0f0f0;"></div>
<div style="left:1362px;top:131px;width:3px;height:808px;background:#f4f4f4;"></div>
<div style="left:8px;top:76px;width:1px;height:867px;background:#d6d2ce;"></div>
<div style="left:8px;top:942px;width:1358px;height:1px;background:#b8b4b0;"></div>
<div style="left:1365px;top:101px;width:1px;height:842px;background:#b8b4b0;"></div>
<div style="left:440px;top:108px;width:68px;height:23px;background:#ebebeb;box-sizing:border-box;border-left:1px solid #a8a8a8;border-top:1px solid #a8a8a8;border-right:1px solid #a0a0a0"></div>
<div class="tr" style="left:446px;top:115px"><i><em>b</em></i><i style="justify-content:flex-start"><em>.</em></i><i><em>c</em></i><i><em>l</em></i><i><em>a</em></i><i><em>s</em></i><i><em>s</em></i></div>
<svg style="left:491px;top:115px" width="10" height="10"><use href="#tx"/></svg>
<div style="left:508px;top:106px;width:71px;height:27px;background:#ffffff;box-sizing:border-box;border-left:1px solid #a8a8a8;border-top:1px solid #a8a8a8;border-right:1px solid #a0a0a0"></div>
<div class="tr" style="left:515px;top:112px"><i><em>a</em></i><i style="justify-content:flex-start"><em>.</em></i><i><em>c</em></i><i><em>l</em></i><i><em>a</em></i><i><em>s</em></i><i><em>s</em></i></div>
<svg style="left:559px;top:113px" width="10" height="10"><use href="#tx"/></svg>
<div style="left:440px;top:130px;width:922px;height:1px;background:#a8a8a8;"></div>
<div style="left:509px;top:130px;width:69px;height:1px;background:#ffffff;"></div>
<div style="left:438px;top:131px;width:924px;height:3px;background:#ffffff;"></div>
<div style="left:440px;top:134px;width:922px;height:803px;background:#ffffff;box-sizing:border-box;border-top:1px solid #7a808c;border-left:1px solid #7a808c;border-right:2px solid #7a808c;border-bottom:1px solid #7a808c"></div>
<div style="left:439px;top:938px;width:923px;height:1px;background:#b0b0b0;"></div>
<div style="left:453px;top:135px;width:1px;height:801px;background:#e3e3e3;"></div>
<div style="left:454px;top:137px;width:889px;height:15px;background:#e8f2fe;"></div>
<div style="left:1344px;top:135px;width:15px;height:801px;background:#f0f0f0;"></div>
<div style="left:1344px;top:152px;width:15px;height:551px;background:#cdcdcd;"></div>
<svg style="left:1348px;top:141px" width="8" height="6"><use href="#up"/></svg>
<svg style="left:1348px;top:925px" width="8" height="6"><use href="#dn"/></svg>
<div style="left:441px;top:135px;width:903px;height:800px;overflow:hidden">
<div class="cd" style="left:15px;top:2px"><b>package</b> com.neusoft.edu.v6.ydszxy.hdjiaoda.appcenter.c.b;</div>
<div class="cd" style="left:15px;top:17px"></div>
<div class="cd" style="left:15px;top:32px"><b>import</b> java.security.Key;</div>
<div class="cd" style="left:15px;top:47px"><b>import</b> java.security.spec.KeySpec;</div>
<div class="cd" style="left:15px;top:62px"><b>import</b> javax.crypto.Cipher;</div>
<div class="cd" style="left:15px;top:77px"><b>import</b> javax.crypto.SecretKeyFactory;</div>
<div class="cd" style="left:15px;top:92px"><b>import</b> javax.crypto.spec.DESedeKeySpec;</div>
<div class="cd" style="left:15px;top:107px"><b>import</b> javax.crypto.spec.IvParameterSpec;</div>
<div class="cd" style="left:15px;top:122px"></div>
<div class="cd" style="left:15px;top:137px"><b>public</b> <b>final</b> <b>class</b> a</div>
<div class="cd" style="left:15px;top:152px">{</div>
<div class="cd" style="left:15px;top:167px">  <b>public</b> <b>static</b> String a(String paramString)</div>
<div class="cd" style="left:15px;top:182px">  {</div>
<div class="cd" style="left:15px;top:197px">    Object localObject = <b>new</b> DESedeKeySpec(<span class="s">&quot;neusofteducationplatform&quot;</span>.getBytes());</div>
<div class="cd" style="left:15px;top:212px">    localObject = SecretKeyFactory.getInstance(<span class="s">&quot;desede&quot;</span>).generateSecret((KeySpec)localObject);</div>
<div class="cd" style="left:15px;top:227px">    Cipher localCipher = Cipher.getInstance(<span class="s">&quot;desede/CBC/PKCS5Padding&quot;</span>);</div>
<div class="cd" style="left:15px;top:242px">    localCipher.init(1, (Key)localObject, <b>new</b> IvParameterSpec(<span class="s">&quot;01234567&quot;</span>.getBytes()));</div>
<div class="cd" style="left:15px;top:257px">    <b>return</b> <u>a</u>(localCipher.doFinal(paramString.getBytes(<span class="s">&quot;utf-8&quot;</span>)));</div>
<div class="cd" style="left:15px;top:272px">  }</div>
<div class="cd" style="left:15px;top:287px"></div>
<div class="cd" style="left:15px;top:302px">  <b>private</b> <b>static</b> String a(<b>byte</b>[] paramArrayOfByte)</div>
<div class="cd" style="left:15px;top:317px">  {</div>
<div class="cd" style="left:15px;top:332px">    String str1 = <span class="s">&quot;&quot;</span>;</div>
<div class="cd" style="left:15px;top:347px">    <b>int</b> i = 0;</div>
<div class="cd" style="left:15px;top:362px">    <b>for</b> (;;)</div>
<div class="cd" style="left:15px;top:377px">    {</div>
<div class="cd" style="left:15px;top:392px">      <b>if</b> (i &gt;= paramArrayOfByte.length) {</div>
<div class="cd" style="left:15px;top:407px">        <b>return</b> str1;</div>
<div class="cd" style="left:15px;top:422px">      }</div>
<div class="cd" style="left:15px;top:437px">      String str3 = Integer.toHexString(paramArrayOfByte[i] &amp; 0xFF);</div>
<div class="cd" style="left:15px;top:452px">      String str2 = str3;</div>
<div class="cd" style="left:15px;top:467px">      <b>if</b> (str3.length() == 1) {</div>
<div class="cd" style="left:15px;top:482px">        str2 = <span class="s">&#x27;0&#x27;</span> + str3;</div>
<div class="cd" style="left:15px;top:497px">      }</div>
<div class="cd" style="left:15px;top:512px">      str1 = str1 + str2.toUpperCase();</div>
<div class="cd" style="left:15px;top:527px">      i += 1;</div>
<div class="cd" style="left:15px;top:542px">    }</div>
<div class="cd" style="left:15px;top:557px">  }</div>
<div class="cd" style="left:15px;top:572px"></div>
<div class="cd" style="left:15px;top:587px">  <b>public</b> <b>static</b> String b(String paramString)</div>
<div class="cd" style="left:15px;top:602px">  {</div>
<div class="cd" style="left:15px;top:617px">    Object localObject = <b>new</b> DESedeKeySpec(<span class="s">&quot;neusofteducationplatform&quot;</span>.getBytes());</div>
<div class="cd" style="left:15px;top:632px">    localObject = SecretKeyFactory.getInstance(<span class="s">&quot;desede&quot;</span>).generateSecret((KeySpec)localObject);</div>
<div class="cd" style="left:15px;top:647px">    Cipher localCipher = Cipher.getInstance(<span class="s">&quot;desede/CBC/PKCS5Padding&quot;</span>);</div>
<div class="cd" style="left:15px;top:662px">    localCipher.init(2, (Key)localObject, <b>new</b> IvParameterSpec(<span class="s">&quot;01234567&quot;</span>.getBytes()));</div>
<div class="cd" style="left:15px;top:677px">    <b>return</b> <b>new</b> String(localCipher.doFinal(<u>c</u>(paramString)), <span class="s">&quot;utf-8&quot;</span>);</div>
<div class="cd" style="left:15px;top:692px">  }</div>
<div class="cd" style="left:15px;top:707px"></div>
<div class="cd" style="left:15px;top:722px">  <b>private</b> <b>static</b> <b>byte</b>[] c(String paramString)</div>
<div class="cd" style="left:15px;top:737px">  {</div>
<div class="cd" style="left:15px;top:752px">    <b>if</b> ((paramString == <b>null</b>) || (paramString.equals(<span class="s">&quot;&quot;</span>)))</div>
<div class="cd" style="left:15px;top:767px">    {</div>
<div class="cd" style="left:15px;top:782px">      paramString = <b>null</b>;</div>
<div class="cd" style="left:15px;top:797px">      <b>return</b> paramString;</div>
<div class="cd" style="left:15px;top:812px">    }</div>
</div>
<svg style="left:443px;top:170px" width="9" height="9"><use href="#fold"/></svg>
<svg style="left:443px;top:290px" width="9" height="9"><use href="#fold"/></svg>
<svg style="left:443px;top:320px" width="9" height="9"><use href="#fold"/></svg>
<svg style="left:443px;top:455px" width="9" height="9"><use href="#fold"/></svg>
<svg style="left:443px;top:515px" width="9" height="9"><use href="#fold"/></svg>
<svg style="left:443px;top:530px" width="9" height="9"><use href="#fold"/></svg>
<svg style="left:443px;top:605px" width="9" height="9"><use href="#fold"/></svg>
<svg style="left:443px;top:740px" width="9" height="9"><use href="#fold"/></svg>
<svg style="left:443px;top:875px" width="9" height="9"><use href="#fold"/></svg>
<svg style="left:443px;top:905px" width="9" height="9"><use href="#fold"/></svg>
<svg style="left:0;top:0" width="1376" height="952"><defs><linearGradient id="ag" gradientUnits="userSpaceOnUse" x1="512.4" y1="137.9" x2="207.5" y2="706.5"><stop offset="0" stop-color="#ff0000" stop-opacity="0.25"/><stop offset="0.2" stop-color="#ff0000" stop-opacity="0.95"/><stop offset="1" stop-color="#ff0000"/></linearGradient></defs><polygon points="512.14,137.76 206.22,705.81 208.78,707.19 512.66,138.04" fill="url(#ag)"/><polygon points="205.2,710.9 205.2,699.8 213.6,705.1" fill="#ff0000"/></svg></body></html>
